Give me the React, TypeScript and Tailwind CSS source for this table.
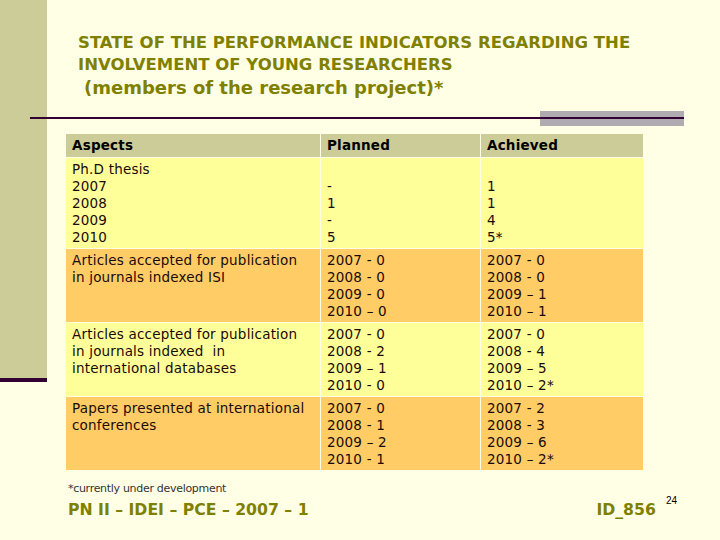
const rows = [
  {
    bg: 'bg-[#ffff99]',
    aspect: ['Ph.D thesis', '2007', '2008', '2009', '2010'],
    planned: ['\u00a0', '-', '1', '-', '5'],
    achieved: ['\u00a0', '1', '1', '4', '5*'],
  },
  {
    bg: 'bg-[#ffcc66]',
    aspect: ['Articles accepted for publication', 'in journals indexed ISI'],
    planned: ['2007 - 0', '2008 - 0', '2009 - 0', '2010 \u2013 0'],
    achieved: ['2007 - 0', '2008 - 0', '2009 \u2013 1', '2010 \u2013 1'],
  },
  {
    bg: 'bg-[#ffff99]',
    aspect: ['Articles accepted for publication', 'in journals indexed\u00a0 in', 'international databases'],
    planned: ['2007 - 0', '2008 - 2', '2009 \u2013 1', '2010 - 0'],
    achieved: ['2007 - 0', '2008 - 4', '2009 \u2013 5', '2010 \u2013 2*'],
  },
  {
    bg: 'bg-[#ffcc66]',
    aspect: ['Papers presented at international', 'conferences'],
    planned: ['2007 - 0', '2008 - 1', '2009 \u2013 2', '2010 - 1'],
    achieved: ['2007 - 2', '2008 - 3', '2009 \u2013 6', '2010 \u2013 2*'],
  },
]

function Cell({ lines, bg }: { lines: string[]; bg: string }) {
  return (
    <div className={`${bg} pl-[6px] pt-[3px] pb-[2px]`}>
      {lines.map((l, i) => (
        <div key={i} className="whitespace-pre">
          {l}
        </div>
      ))}
    </div>
  )
}

export default function App() {
  return (
    <div className="relative w-[720px] h-[540px] overflow-hidden bg-[#ffffe5] flex font-['DejaVu_Sans',sans-serif]">
      {/* Sidebar */}
      <div className="w-[47px] shrink-0">
        <div className="h-[382px] bg-[#cccc99] border-b-4 border-[#330033]" />
      </div>

      {/* Rule across the top */}
      <div className="absolute left-[540px] top-[111px] w-[144px] h-[15px] bg-[#b0abb0]" />
      <div className="absolute left-[30px] top-[117px] w-[654px] h-[2px] bg-[#330033]" />

      <div className="flex-1 flex flex-col">
        {/* Title */}
        <div className="ml-[31px] mt-[32px] text-[#808000] font-bold">
          <div className="text-[16.5px] leading-[22px]">
            STATE OF THE PERFORMANCE INDICATORS REGARDING THE
          </div>
          <div className="text-[16.5px] leading-[22px]">
            INVOLVEMENT OF YOUNG RESEARCHERS
          </div>
          <div className="ml-[6px] text-[18px] leading-[24px]">
            (members of the research project)*
          </div>
        </div>

        {/* Table */}
        <div className="ml-[19px] mt-[34px] w-[577px] grid grid-cols-[254px_159px_162px] gap-px text-[13.5px] leading-[17px] tracking-[0.2px] text-[#1a0a0a]">
          <div className="bg-[#cccc99] pl-[6px] h-[23px] flex items-center font-bold text-black">Aspects</div>
          <div className="bg-[#cccc99] pl-[6px] h-[23px] flex items-center font-bold text-black">Planned</div>
          <div className="bg-[#cccc99] pl-[6px] h-[23px] flex items-center font-bold text-black">Achieved</div>
          {rows.map((r, i) => (
            <div key={i} className="contents">
              <Cell lines={r.aspect} bg={r.bg} />
              <Cell lines={r.planned} bg={r.bg} />
              <Cell lines={r.achieved} bg={r.bg} />
            </div>
          ))}
        </div>

        {/* Footnote */}
        <div className="ml-[21px] mt-[12px] text-[11px] leading-[14px] text-[#333333] tracking-[-0.3px]">
          *currently under development
        </div>

        {/* Footer */}
        <div className="ml-[21px] mt-[4px] flex items-start text-[#808000] font-bold text-[15.7px] leading-[20px]">
          <span>PN II – IDEI – PCE – 2007 – 1</span>
          <span className="ml-auto">ID_856</span>
          <span className="ml-[10px] mr-[43px] -mt-[9px] text-[10px] font-normal text-black font-['Liberation_Sans',sans-serif]">
            24
          </span>
        </div>
      </div>
    </div>
  )
}
